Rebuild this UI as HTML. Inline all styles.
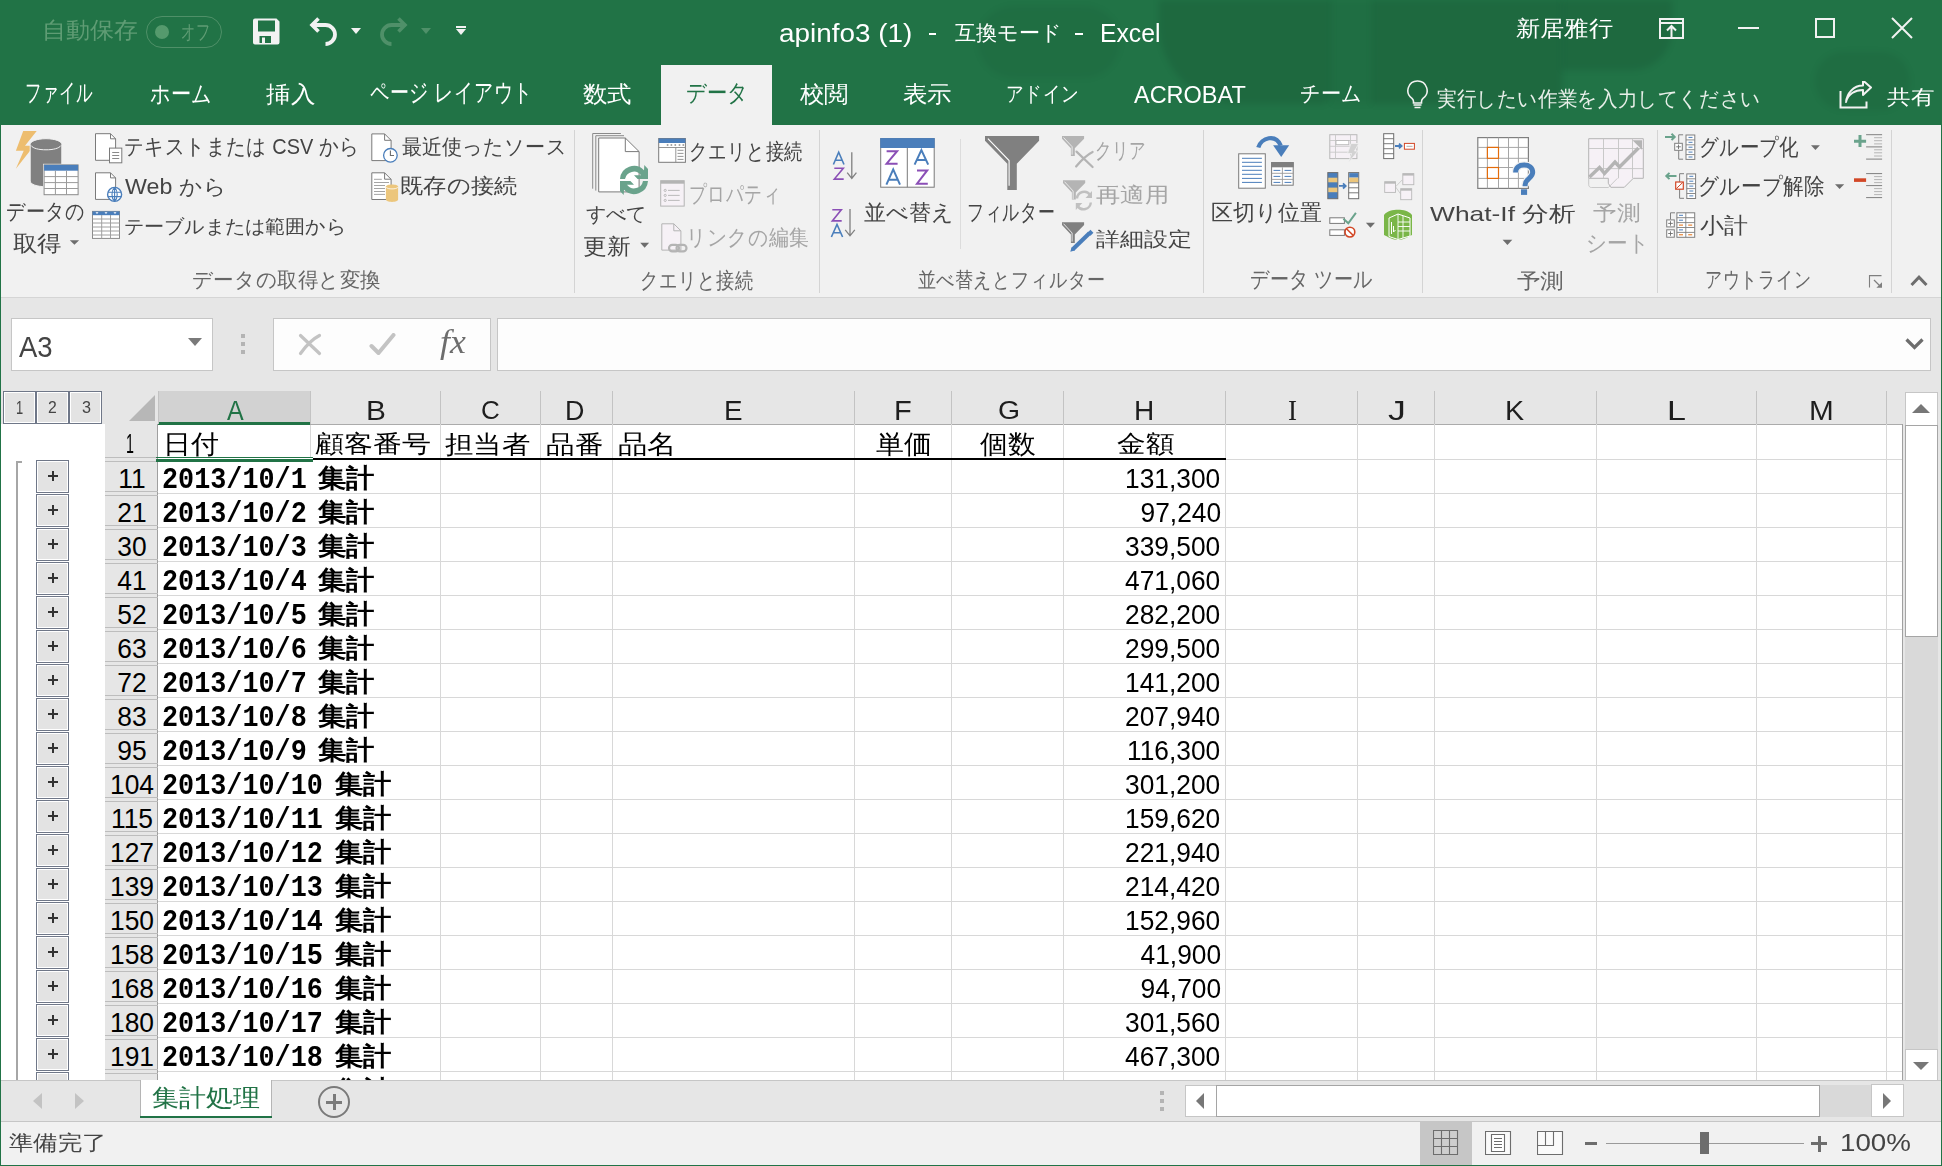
<!DOCTYPE html>
<html><head><meta charset="utf-8"><title>Excel</title>
<style>
html,body{margin:0;padding:0}
body{width:1942px;height:1166px;position:relative;overflow:hidden;background:#fff;font-family:"Liberation Sans",sans-serif}
div,svg{position:absolute;box-sizing:border-box}
.t{white-space:pre;transform-origin:0 0}
.t.r{transform-origin:100% 0}
.t.c{transform-origin:50% 0}
.sep{width:1px;background:#d4d4d4}
.vl{width:1px;background:#d8d8d8;top:424px;height:656px}
.hl{height:1px;background:#d8d8d8;left:158px;width:1744px}
.cs{width:1px;background:#c3c3c3;top:391px;height:33px}
.ob{width:33px;height:33px;left:36px;border:1px solid #6f7788;background:#e3e3e3;box-shadow:inset 0 0 0 1px #fff}
.rh{left:105px;width:53px;height:1px;background:#bdbdbd}
</style></head><body>
<!-- title + tabs -->
<div style="left:0;top:0;width:1942px;height:125px;background:#217346"></div>
<div style="left:978px;top:6px;width:142px;height:72px;border-radius:36px;background:rgba(0,0,0,.045);filter:blur(3px)"></div>
<div style="left:1159px;top:0;width:172px;height:104px;border-radius:0 0 10px 80px;background:rgba(0,0,0,.085);filter:blur(3px)"></div>
<div style="left:1331px;top:0;width:41px;height:104px;background:rgba(0,0,0,.035);filter:blur(3px)"></div>
<div style="left:1372px;top:0;width:190px;height:104px;background:rgba(0,0,0,.085);filter:blur(3px)"></div>
<div style="left:1562px;top:0;width:110px;height:70px;border-radius:0 0 40px 0;background:rgba(0,0,0,.085);filter:blur(3px)"></div>
<div style="left:1815px;top:52px;width:95px;height:58px;border-radius:40px;background:rgba(0,0,0,.05);filter:blur(3px)"></div>
<div style="left:928.6px;top:33px;width:7.8px;height:2px;background:#fff"></div>
<div style="left:1074.8px;top:33px;width:8.2px;height:2px;background:#fff"></div>
<div style="left:661px;top:65px;width:111px;height:60px;background:#f1f1f1"></div>
<!-- autosave pill -->
<div style="left:146px;top:16px;width:76px;height:32px;border:1px solid #4f9068;border-radius:16px"></div>
<div style="left:155px;top:25px;width:14px;height:14px;border-radius:7px;background:#559a6d"></div>
<!-- save icon -->
<svg style="left:253px;top:18px" width="27" height="27" viewBox="0 0 27 27"><path d="M2 0.5h21.5l3 3v21a2 2 0 0 1-2 2h-22.5a2 2 0 0 1-2-2v-22a2 2 0 0 1 2-2z" fill="#f2f2f2"/><rect x="5" y="2.5" width="17" height="11" fill="#217346"/><rect x="6.5" y="18" width="11.5" height="7" fill="#217346"/><rect x="9" y="19.5" width="3" height="5.5" fill="#f2f2f2"/></svg>
<!-- undo -->
<svg style="left:309px;top:16px" width="30" height="30" viewBox="0 0 30 30"><path d="M9.5 2.5L3 9l6.5 6.5" stroke="#f2f2f2" stroke-width="3.6" fill="none"/><path d="M3.5 9H16.5a9.5 9.5 0 0 1 0 19" stroke="#f2f2f2" stroke-width="3.8" fill="none"/></svg>
<svg style="left:351px;top:28px" width="11" height="7"><path d="M0 0h10l-5 6z" fill="#f2f2f2"/></svg>
<!-- redo faded -->
<svg style="left:378px;top:16px" width="30" height="30" viewBox="0 0 30 30"><path d="M20.5 2.5L27 9l-6.5 6.5" stroke="#4f9069" stroke-width="3.6" fill="none"/><path d="M26.5 9H13.5a9.5 9.5 0 0 0 0 19" stroke="#4f9069" stroke-width="3.8" fill="none"/></svg>
<svg style="left:421px;top:28px" width="11" height="7"><path d="M0 0h10l-5 6z" fill="#4f9069"/></svg>
<!-- customize qat -->
<div style="left:456px;top:26px;width:10px;height:1.5px;background:#f2f2f2"></div>
<svg style="left:456px;top:29px" width="11" height="7"><path d="M0 0h10l-5 6z" fill="#f2f2f2"/></svg>
<!-- window controls -->
<div style="left:1659px;top:18px;width:25px;height:21px;border:2px solid #f2f2f2"></div>
<div style="left:1659px;top:22px;width:25px;height:2px;background:#f2f2f2"></div>
<svg style="left:1664px;top:24px" width="15" height="15"><path d="M7.5 2v11M3 6.5l4.5-4.5 4.5 4.5" stroke="#f2f2f2" stroke-width="2" fill="none"/></svg>
<div style="left:1738px;top:27px;width:21px;height:2px;background:#f2f2f2"></div>
<div style="left:1815px;top:18px;width:20px;height:20px;border:2px solid #f2f2f2"></div>
<svg style="left:1891px;top:17px" width="22" height="22"><path d="M1 1l20 20M21 1l-20 20" stroke="#f2f2f2" stroke-width="2"/></svg>
<!-- lightbulb -->
<svg style="left:1406px;top:80px" width="23" height="29" viewBox="0 0 23 29"><path d="M11.5 1a9.5 9.5 0 0 0-5.5 17.3c1.2 1 1.5 2 1.5 3.2v1.5h8v-1.5c0-1.2 .3-2.2 1.5-3.2a9.5 9.5 0 0 0-5.5-17.3z" fill="none" stroke="#f2f2f2" stroke-width="1.6"/><path d="M7.5 25h8M8.5 27.5h6" stroke="#f2f2f2" stroke-width="1.6"/></svg>
<!-- share -->
<svg style="left:1839px;top:81px" width="34" height="28" viewBox="0 0 34 28"><path d="M1.5 10v16.5h26v-6" fill="none" stroke="#f2f2f2" stroke-width="2"/><path d="M7 21c2-8 9-12 17-12v5l8-7.5-8-7v5c-10 0-16 8-17 16.5z" fill="none" stroke="#f2f2f2" stroke-width="2" stroke-linejoin="round"/></svg>

<!-- ribbon -->
<div style="left:0;top:125px;width:1942px;height:172px;background:#f1f1f1"></div>
<div style="left:0;top:297px;width:1942px;height:1px;background:#d5d5d5"></div>
<div class="sep" style="left:574px;top:130px;height:163px"></div>
<div class="sep" style="left:819px;top:130px;height:163px"></div>
<div class="sep" style="left:960px;top:139px;height:110px;background:#dcdcdc"></div>
<div class="sep" style="left:1203px;top:130px;height:163px"></div>
<div class="sep" style="left:1422px;top:130px;height:163px"></div>
<div class="sep" style="left:1657px;top:130px;height:163px"></div>
<div class="sep" style="left:1891px;top:130px;height:163px"></div>
<svg style="left:0;top:125px" width="1942" height="172" viewBox="0 125 1942 172" fill="none">
<!-- Get Data -->
<path d="M23.2 130.9h13.5l-11.7 14.8h9l-18.1 23.1 7.8-18h-7.8z" fill="#edbd6f"/>
<path d="M30.2 144.5v36.5c0 3.5 7 5.7 15.8 5.7s15.8-2.2 15.8-5.7v-36.5c0-3.3-7-5.8-15.8-5.8s-15.8 2.5-15.8 5.8z" fill="#808080" stroke="#f1f1f1" stroke-width="1"/>
<path d="M31 145.5c2 3 8 4.3 15 4.3s13-1.3 15-4.3" stroke="#f1f1f1" stroke-width="1"/>
<rect x="43.6" y="164.4" width="35" height="30.8" fill="#fff" stroke="#f1f1f1" stroke-width="1.2"/>
<rect x="44.1" y="164.9" width="34" height="29.8" fill="#fff" stroke="#8a8a8a" stroke-width="1"/>
<rect x="44.1" y="164.9" width="34" height="5.8" fill="#4a7ebb"/>
<path d="M55.4 170.7v24M66.5 170.7v24M44.1 176.6h34M44.1 182.6h34M44.1 188.5h34" stroke="#9a9a9a" stroke-width="1"/>
<path d="M69.8 240.2h9.3l-4.65 4.6z" fill="#6d6d6d"/>
<!-- From Text -->
<path d="M95.5 133.7h15l5.1 5.1v21.5h-20.1z" fill="#fff" stroke="#7a7a7a" stroke-width="1"/>
<path d="M110.5 133.7v5.1h5.1" stroke="#7a7a7a" stroke-width="1"/>
<rect x="109.5" y="148.1" width="12.3" height="14.7" fill="#fff" stroke="#7a7a7a" stroke-width="1"/>
<path d="M112.2 152.5h7M112.2 155.5h7M112.2 158.5h7" stroke="#8a8a8a" stroke-width="1"/>
<!-- From Web -->
<path d="M95.5 172.8h15l5.1 5.1v21.5h-20.1z" fill="#fff" stroke="#7a7a7a" stroke-width="1"/>
<path d="M110.5 172.8v5.1h5.1" stroke="#7a7a7a" stroke-width="1"/>
<circle cx="114.6" cy="194.4" r="7" fill="#fff" stroke="#4a7ebb" stroke-width="1.4"/>
<path d="M107.8 192.2h13.6M107.8 196.6h13.6M114.6 187.4v14M114.6 187.4c-3.5 3.5-3.5 10.5 0 14M114.6 187.4c3.5 3.5 3.5 10.5 0 14" stroke="#4a7ebb" stroke-width="1.1"/>
<!-- From Table -->
<rect x="92.5" y="211.4" width="27" height="27" fill="#fff" stroke="#8a8a8a" stroke-width="1"/>
<rect x="92.5" y="211.4" width="27" height="3.8" fill="#4a7ebb"/>
<path d="M95.5 212.3h3l-1.5 1.8zM104.5 212.3h3l-1.5 1.8zM113.5 212.3h3l-1.5 1.8z" fill="#fff"/>
<path d="M101.7 215v23.5M110.5 215v23.5M92.5 219h27M92.5 223h27M92.5 227h27M92.5 231h27M92.5 235h27" stroke="#a0a0a0" stroke-width="1"/>
<!-- Recent sources -->
<path d="M371.8 133.9h12.8l6.5 6.5v20.2h-19.3z" fill="#fff" stroke="#7a7a7a" stroke-width="1"/>
<path d="M384.6 133.9v6.4h6.5" stroke="#7a7a7a" stroke-width="1"/>
<circle cx="390.4" cy="155.3" r="6.8" fill="#fff" stroke="#4a7ebb" stroke-width="1.3"/>
<path d="M390.4 150.5v5h3.6" stroke="#6d6d6d" stroke-width="1.1"/>
<!-- Existing connections -->
<path d="M371.8 172.8h12.8l6.5 6.5v20.2h-19.3z" fill="#fff" stroke="#7a7a7a" stroke-width="1"/>
<path d="M384.6 172.8v6.4h6.5" stroke="#7a7a7a" stroke-width="1"/>
<path d="M374 179.3h7.8M374 182.5h15M374 185.5h11M374 188.5h11M374 191.5h11M374 194.4h11" stroke="#9a9a9a" stroke-width="0.9"/>
<path d="M385.9 186.6v13c0 1.4 2.7 2.3 6.1 2.3s6.1-0.9 6.1-2.3v-13c0-1.3-2.7-2.2-6.1-2.2s-6.1 0.9-6.1 2.2z" fill="#ecc67c"/>
<path d="M386.2 187.4c1 1 3 1.5 5.8 1.5s4.8-0.5 5.8-1.5" stroke="#fff" stroke-width="0.8"/>
<!-- Refresh all -->
<path d="M592.7 188.7v-55.2h28.2M595.8 190.6v-54.9h28.2" stroke="#8a8a8a" stroke-width="1"/>
<path d="M598.7 138h26.6l13.8 13.6v40.3h-40.4z" fill="#fff" stroke="#7a7a7a" stroke-width="1"/>
<path d="M625.3 138v13.6h13.8" stroke="#7a7a7a" stroke-width="1"/>
<path d="M620 179A14 14 0 0 1 644 170.2L644.3 165L648 169L648 179L637.6 179L634 175.2L641 175.2A9 9 0 0 0 625 179Z" fill="#6aa38c"/>
<path d="M648 181A14 14 0 0 1 624 189.8L623.7 195L620 191L620 181L630.4 181L634 184.8L627 184.8A9 9 0 0 0 643 181Z" fill="#6aa38c"/>
<path d="M640.2 242.8h8.9l-4.45 5z" fill="#6d6d6d"/>
<!-- Queries & connections -->
<rect x="658.7" y="138.5" width="26.7" height="23.8" fill="#fff" stroke="#7a7a7a" stroke-width="1"/>
<rect x="658.7" y="138.5" width="26.7" height="4.5" fill="#4a7ebb"/>
<path d="M666.8 145h1.6M670.6 145h1.6M674.5 145h1.6M678.7 145h1.6M682.5 145h1.6" stroke="#8a8a8a" stroke-width="1.4"/>
<path d="M658.7 147.5h26.7M675.8 147.5v14.8M677.5 150.3h6M677.5 153.4h6M677.5 156.4h6M677.5 159.4h6" stroke="#8a8a8a" stroke-width="0.9"/>
<!-- Properties faded -->
<rect x="660.7" y="180.7" width="23.5" height="25.4" fill="#f6f1f6" stroke="#b4b4b4" stroke-width="1"/>
<rect x="660.7" y="180.7" width="23.5" height="3" fill="#b4b4b4"/>
<circle cx="665.2" cy="190.4" r="1.1" stroke="#b4b4b4" stroke-width="0.9"/><circle cx="665.2" cy="195.4" r="1.1" stroke="#b4b4b4" stroke-width="0.9"/><circle cx="665.2" cy="200.4" r="1.1" stroke="#b4b4b4" stroke-width="0.9"/>
<path d="M668 190.4h11.7M668 195.4h11.7M668 200.4h11.7" stroke="#b4b4b4" stroke-width="0.9"/>
<!-- Edit links faded -->
<path d="M661.8 223.8h12l7.1 7v19.3h-19.1z" fill="#f6f1f6" stroke="#b4b4b4" stroke-width="1"/>
<path d="M673.8 223.8v7h7.1" stroke="#b4b4b4" stroke-width="1"/>
<rect x="669" y="244.8" width="10" height="6.6" rx="3.3" stroke="#b4b4b4" stroke-width="2.2"/>
<rect x="676.5" y="244.8" width="10" height="6.6" rx="3.3" stroke="#b4b4b4" stroke-width="2.2"/>

<!-- Sort AZ -->
<path d="M833.4 164.5l5.3-12.3 5.3 12.3M835.2 160.3h7" stroke="#4a7ebb" stroke-width="1.6"/>
<path d="M834.3 168.3h9l-9 10.8h9.4" stroke="#8b4fb6" stroke-width="1.6"/>
<path d="M851.8 152.2v26.2M847.2 172.6l4.6 5.8 4.6-5.8" stroke="#808080" stroke-width="1.3"/>
<!-- Sort ZA -->
<path d="M832.3 209.7h9l-9 11.2h9.4" stroke="#8b4fb6" stroke-width="1.6"/>
<path d="M831.4 237l5.6-12.6 5.6 12.6M833.3 232.8h7.4" stroke="#4a7ebb" stroke-width="1.6"/>
<path d="M850 208.9v27M845.2 229.8l4.8 6 4.8-6" stroke="#808080" stroke-width="1.3"/>
<!-- Sort dialog -->
<rect x="880.7" y="138.6" width="53.5" height="48.6" fill="#fff" stroke="#7a7a7a" stroke-width="1"/>
<rect x="880.2" y="138.1" width="54.5" height="9.9" fill="#4a7ebb"/>
<path d="M907.3 148v39.2" stroke="#7a7a7a" stroke-width="1"/>
<path d="M886.6 151.2h10.5l-10.5 12.5h11" stroke="#8b4fb6" stroke-width="2"/>
<path d="M886.4 184.7l6.8-15.3 6.8 15.3M888.7 179.8h9" stroke="#4a7ebb" stroke-width="2"/>
<path d="M914.6 164.7l6.8-14.5 6.8 14.5M916.9 160h9" stroke="#4a7ebb" stroke-width="2"/>
<path d="M917 170.4h10.2l-10.2 13.3h10.8" stroke="#8b4fb6" stroke-width="2"/>
<!-- Filter -->
<path d="M985 136h54.1v4.8l-22.3 22.9v26.2h-9.5v-26.2l-22.3-22.9z" fill="#808080"/>
<path d="M987.9 138.6l21.2 21.9v25.3" stroke="#fff" stroke-width="1.1"/>
<!-- Clear -->
<path d="M1062 136h22.1v2.8l-9.3 9.5v7.6h-3.9v-7.6l-8.9-9.5z" fill="#b4b4b4"/>
<path d="M1063.5 137.5l8.6 9.2v8" stroke="#f1f1f1" stroke-width="0.9"/>
<path d="M1076.5 151.6l16.1 15.4M1092.6 152c-6 3-11.5 8.5-16.5 14.5" stroke="#b4b4b4" stroke-width="2.2" stroke-linecap="round"/>
<!-- Reapply -->
<path d="M1063 180.2h22.2v2.8l-9.4 9.6v7h-3.9v-7l-8.9-9.6z" fill="#b4b4b4"/>
<path d="M1064.5 181.7l8.6 9.3v8" stroke="#f1f1f1" stroke-width="0.9"/>
<path d="M1077 198.5a7.2 7.2 0 0 1 13.2-3.5" stroke="#c0c0c0" stroke-width="2.4"/>
<path d="M1092 191v7h-6.5z" fill="#c0c0c0"/>
<path d="M1090.8 202.5a7.2 7.2 0 0 1-13.2 3.5" stroke="#c0c0c0" stroke-width="2.4"/>
<path d="M1075.8 210v-7h6.5z" fill="#c0c0c0"/>
<!-- Advanced -->
<path d="M1062 222.2h22.1v2.8l-9.3 9.6v8.3h-3.9v-8.3l-8.9-9.6z" fill="#808080"/>
<path d="M1063.5 223.7l8.6 9.3v8.6" stroke="#f1f1f1" stroke-width="0.9"/>
<path d="M1072.6 249.5l17-16.4" stroke="#4a7ebb" stroke-width="4.2"/>
<path d="M1070.3 251.8l1.2-4.3 3.2 3.1z" fill="#4a7ebb"/>
<path d="M1089 231.3l3 2.9" stroke="#4a7ebb" stroke-width="4.2"/>
<!-- Text to columns -->
<rect x="1238.7" y="153.8" width="26.6" height="34.4" fill="#fff" stroke="#7a7a7a" stroke-width="1"/>
<path d="M1242 158.3h19.9M1242 162.3h19.9M1242 166.3h19.9M1242 170.3h19.9M1242 174.3h19.9M1242 178.4h19.9M1242 182.4h19.9" stroke="#4a7ebb" stroke-width="1"/>
<rect x="1271.6" y="162.6" width="21.6" height="22.6" fill="#fff" stroke="#7a7a7a" stroke-width="1"/>
<rect x="1271.1" y="162.1" width="22.6" height="5.2" fill="#7f7f7f"/>
<path d="M1282.4 167.3v18M1271.6 173.3h21.6M1271.6 179.4h21.6" stroke="#9a9a9a" stroke-width="0.9"/>
<path d="M1273.5 170.4h6.8M1284.5 170.4h6.8M1273.5 176.4h6.8M1284.5 176.4h6.8M1273.5 182.4h6.8M1284.5 182.4h6.8" stroke="#4a7ebb" stroke-width="1"/>
<path d="M1258.3 147.5c3-10 17.5-14 22.4-2" stroke="#4a7ebb" stroke-width="4.3"/>
<path d="M1273.1 145.2h16.1l-8 11.9z" fill="#4a7ebb"/>
<!-- Flash fill faded -->
<rect x="1329.8" y="134.7" width="27.1" height="23.9" fill="#f6f1f6" stroke="#b9b9b9" stroke-width="1"/>
<path d="M1335.5 134.7v23.9M1350.5 134.7v23.9M1329.8 140.5h27.1M1329.8 146.3h27.1M1329.8 152.2h27.1" stroke="#c8c8c8" stroke-width="0.9"/>
<rect x="1336" y="140.5" width="12.8" height="4.2" fill="#fff" stroke="#b9b9b9" stroke-width="0.9"/>
<path d="M1351 143.5h7.8l-4.3 7.5h3.5l-9.5 11.6 3-9.1h-4z" fill="#d2d2d2" stroke="#f1f1f1" stroke-width="0.8"/>
<!-- Remove duplicates -->
<rect x="1327.8" y="172.6" width="10" height="26.1" fill="#4a7ebb" stroke="#6d6d6d" stroke-width="1"/>
<path d="M1328.3 177.6h9M1328.3 193.2h9" stroke="#6d6d6d" stroke-width="0"/>
<rect x="1328.3" y="177.7" width="9" height="4.6" fill="#ecc67c"/>
<rect x="1328.3" y="187.6" width="9" height="4.6" fill="#ecc67c"/>
<rect x="1348.7" y="172.6" width="10" height="26.1" fill="#fff" stroke="#6d6d6d" stroke-width="1"/>
<rect x="1349.2" y="173.1" width="9" height="4.5" fill="#4a7ebb"/>
<rect x="1349.2" y="177.7" width="9" height="4.6" fill="#ecc67c"/>
<path d="M1348.7 182.8h10M1348.7 187.8h10M1348.7 192.8h10" stroke="#6d6d6d" stroke-width="0.9"/>
<path d="M1339 185.9h6.5M1343 183.3l2.7 2.6-2.7 2.6" stroke="#4a7ebb" stroke-width="1.8"/>
<!-- Data validation -->
<rect x="1329.8" y="217.8" width="14.6" height="5.6" fill="#fff" stroke="#7a7a7a" stroke-width="1"/>
<rect x="1329.8" y="229.8" width="14.6" height="5.6" fill="#fff" stroke="#7a7a7a" stroke-width="1"/>
<path d="M1343.4 218.8l4.9 4.5 7.6-10.5" stroke="#6aa38c" stroke-width="2"/>
<circle cx="1349.9" cy="232.1" r="4.9" fill="#fff" stroke="#d24726" stroke-width="1.6"/>
<path d="M1346.5 228.7l6.8 6.8" stroke="#d24726" stroke-width="1.6"/>
<path d="M1365.9 222.8h9.1l-4.55 5z" fill="#6d6d6d"/>
<!-- Consolidate -->
<rect x="1383.7" y="133.7" width="10" height="24.9" fill="#fff" stroke="#6d6d6d" stroke-width="1"/>
<path d="M1383.7 138.7h10M1383.7 143.7h10M1383.7 148.7h10M1383.7 153.7h10" stroke="#6d6d6d" stroke-width="0.9"/>
<path d="M1395 146h6M1399 143.6l2.6 2.4-2.6 2.4" stroke="#4a7ebb" stroke-width="1.8"/>
<rect x="1404.4" y="143.4" width="10" height="5.8" fill="#fff" stroke="#d24726" stroke-width="1"/>
<path d="M1406.5 146.3h6" stroke="#9a9a9a" stroke-width="0.8"/>
<!-- Relationships faded -->
<path d="M1395.5 186.8l6.8-7M1395.5 186.8l5 7" stroke="#c8c8c8" stroke-width="0.9"/>
<rect x="1384.7" y="181.7" width="10.8" height="10.7" fill="#f6f1f6" stroke="#b9b9b9" stroke-width="0.9"/>
<rect x="1384.7" y="181.7" width="10.8" height="2" fill="#b9b9b9"/>
<rect x="1402.8" y="173.6" width="11" height="11.1" fill="#f6f1f6" stroke="#b9b9b9" stroke-width="0.9"/>
<rect x="1402.8" y="173.6" width="11" height="2" fill="#b9b9b9"/>
<rect x="1400.7" y="188.7" width="11" height="11" fill="#f6f1f6" stroke="#b9b9b9" stroke-width="0.9"/>
<rect x="1400.7" y="188.7" width="11" height="2" fill="#b9b9b9"/>
<!-- Manage data model -->
<path d="M1384 215c3-4 9-5.2 14-5.2s11 1.2 14 5.2v20c-4 2-9 4.9-14 4.9s-10-2.9-14-4.9z" fill="#7ab648"/>
<path d="M1389 218l9-4 12 4v18l-12 3.5-9-3z" fill="#7ab648" stroke="#fff" stroke-width="1"/>
<path d="M1398 214v25.5M1398 222h12M1398 226.5h12M1398 231h12M1403 216v22" stroke="#fff" stroke-width="0.9"/>
<path d="M1391.5 222v12M1393.5 226v6l2-2" stroke="#fff" stroke-width="1"/>
<!-- What-If -->
<rect x="1477.8" y="137.6" width="50.6" height="50.8" fill="#fff" stroke="#7f7f7f" stroke-width="1.2"/>
<path d="M1487.4 137.6v50.8M1498.5 137.6v50.8M1508.5 137.6v50.8M1518.4 137.6v50.8M1477.8 147.4h50.6M1477.8 158.3h50.6M1477.8 167.5h50.6M1477.8 178.4h50.6" stroke="#a6a6a6" stroke-width="1"/>
<rect x="1487.4" y="147.4" width="11.1" height="10.9" fill="#fff" stroke="#e46c0a" stroke-width="1.2"/>
<rect x="1487.4" y="167.5" width="11.1" height="10.9" fill="#fff" stroke="#e46c0a" stroke-width="1.2"/>
<path d="M1515.6 172.5c0-5 3.5-7.5 8.5-7.5s8.6 2.7 8.6 7.3c0 6.3-7.6 6.3-7.6 12.6v1.4" stroke="#f1f1f1" stroke-width="7.5"/>
<path d="M1515.6 172.5c0-5 3.5-7.5 8.5-7.5s8.6 2.7 8.6 7.3c0 6.3-7.6 6.3-7.6 12.6v1.4" stroke="#4a7ebb" stroke-width="5"/>
<rect x="1521" y="189.3" width="6.1" height="5.6" fill="#4a7ebb"/>
<path d="M1502.6 239.8h9.7l-4.85 5.2z" fill="#6d6d6d"/>
<!-- Forecast faded -->
<path d="M1588.7 138.7h54.6v39.6h-10l-9 9h-13.5l-2.5-4v-5h-19.6z" fill="#f6f1f6" stroke="#b4b4b4" stroke-width="1"/>
<path d="M1588.7 178.3v6.5c0 1.5 1.2 2.7 2.7 2.7h17l9-9.2M1603.5 138.7v39.6M1618.5 138.7v39.6M1632.5 138.7v39.6M1588.7 148.5h54.6M1588.7 168.6h54.6" stroke="#c4c4c4" stroke-width="0.9"/>
<path d="M1589.5 177l10-9.5 5 6 10.5-11.5 4.5 5 19-19" stroke="#b4b4b4" stroke-width="3.4"/>
<path d="M1632.5 140.2h9.5v9.5z" fill="#b4b4b4"/>
<!-- Group -->
<path d="M1665 136.9h9.5M1671.5 133.8l3.2 3.1-3.2 3.1" stroke="#6aa38c" stroke-width="2"/>
<path d="M1683.1 134.8h-4.4v24.4h4.4" stroke="#7f7f7f" stroke-width="1"/>
<rect x="1674.7" y="143.3" width="7.6" height="7" fill="#fff" stroke="#7f7f7f" stroke-width="1"/>
<path d="M1676.2 146.8h4.6M1678.5 144.6v4.5" stroke="#6d6d6d" stroke-width="0.9"/>
<rect x="1686" y="135" width="8.8" height="24.4" fill="#fff" stroke="#7f7f7f" stroke-width="1"/>
<path d="M1686 139.9h8.8M1686 144.8h8.8M1686 149.7h8.8M1686 154.6h8.8" stroke="#7f7f7f" stroke-width="0.9"/>
<path d="M1688.5 137.4h4M1688.5 142.3h4M1688.5 147.2h4M1688.5 152.1h4M1688.5 157h4" stroke="#4a7ebb" stroke-width="1"/>
<path d="M1811 145.2h8.9l-4.45 4.7z" fill="#6d6d6d"/>
<!-- Ungroup -->
<path d="M1676.5 176h-10M1669.5 172.9l-3.2 3.1 3.2 3.1" stroke="#6aa38c" stroke-width="2"/>
<path d="M1684 173.7h-4.4v24.6h4.4" stroke="#7f7f7f" stroke-width="1"/>
<rect x="1675.7" y="182" width="7.6" height="7.2" fill="#fff" stroke="#d24726" stroke-width="1.2"/>
<path d="M1676.3 188.6l6.4-6.1" stroke="#d24726" stroke-width="1"/>
<rect x="1686.8" y="173.9" width="8.8" height="24.6" fill="#fff" stroke="#7f7f7f" stroke-width="1"/>
<path d="M1686.8 178.8h8.8M1686.8 183.7h8.8M1686.8 188.6h8.8M1686.8 193.5h8.8" stroke="#7f7f7f" stroke-width="0.9"/>
<path d="M1689.3 176.3h4M1689.3 181.2h4M1689.3 186.1h4M1689.3 191h4M1689.3 195.9h4" stroke="#4a7ebb" stroke-width="1"/>
<path d="M1835 184.3h9.2l-4.6 4.7z" fill="#6d6d6d"/>
<!-- Subtotal -->
<path d="M1670.5 219.4v-6.6h4.5" stroke="#7f7f7f" stroke-width="1"/>
<rect x="1676.9" y="212.8" width="17.8" height="24.5" fill="#fff" stroke="#7f7f7f" stroke-width="1"/>
<path d="M1685.8 212.8v24.5M1676.9 217.7h17.8M1676.9 222.6h17.8M1676.9 227.5h17.8M1676.9 232.4h17.8" stroke="#7f7f7f" stroke-width="0.9"/>
<path d="M1679 215.3h4M1679 220.2h4M1679 229.9h4" stroke="#4a7ebb" stroke-width="1"/>
<path d="M1679 225.1h4M1688.2 225.1h4M1679 234.8h4M1688.2 234.8h4" stroke="#e46c0a" stroke-width="1"/>
<rect x="1666.7" y="219.9" width="7.6" height="7" fill="#fff" stroke="#7f7f7f" stroke-width="1"/>
<rect x="1666.7" y="229.8" width="7.6" height="7.4" fill="#fff" stroke="#7f7f7f" stroke-width="1"/>
<path d="M1668.2 223.4h4.6M1670.5 221.2v4.5M1668.2 233.5h4.6M1670.5 231.3v4.5" stroke="#6d6d6d" stroke-width="0.9"/>
<!-- Show detail -->
<path d="M1854 141.2h12.1M1860 135.1v12" stroke="#6aa38c" stroke-width="3"/>
<path d="M1866.1 134.7h16M1866.1 146.9h16M1866.1 159.1h16" stroke="#7f7f7f" stroke-width="1"/>
<path d="M1874.1 137.7h8M1874.1 140.7h8M1874.1 143.9h8M1874.1 149.8h8M1874.1 152.8h8M1874.1 156h8" stroke="#b4b4b4" stroke-width="1"/>
<!-- Hide detail -->
<path d="M1854 180.1h12.1" stroke="#d24726" stroke-width="3.6"/>
<path d="M1866.1 173.6h16M1866.1 185.6h16M1866.1 197.6h16" stroke="#7f7f7f" stroke-width="1"/>
<path d="M1874.1 176.6h8M1874.1 179.6h8M1874.1 182.6h8M1874.1 188.6h8M1874.1 191.6h8M1874.1 194.6h8" stroke="#b4b4b4" stroke-width="1"/>
<!-- dialog launcher + collapse -->
<path d="M1881.5 275.6h-12v12" stroke="#7f7f7f" stroke-width="1.1"/>
<path d="M1874 280l5.5 5.5" stroke="#7f7f7f" stroke-width="1.3"/><path d="M1882 282.2v5.6h-5.6z" fill="#7f7f7f"/>
<path d="M1911.5 285l7.5-7.8 7.5 7.8" stroke="#6d6d6d" stroke-width="3"/>
</svg>


<!-- formula bar area -->
<div style="left:0;top:298px;width:1942px;height:126px;background:#e6e6e6"></div>
<div style="left:11px;top:318px;width:202px;height:53px;background:#fff;border:1px solid #c6c6c6"></div>
<svg style="left:188px;top:338px" width="15" height="9"><path d="M0 0h14l-7 8z" fill="#7a7a7a"/></svg>
<div style="left:241px;top:334px;width:4px;height:4px;background:#b4b4b4"></div>
<div style="left:241px;top:342px;width:4px;height:4px;background:#b4b4b4"></div>
<div style="left:241px;top:350px;width:4px;height:4px;background:#b4b4b4"></div>
<div style="left:273px;top:318px;width:218px;height:53px;background:#fdfdfd;border:1px solid #c6c6c6"></div>
<svg style="left:298px;top:333px" width="25" height="23" viewBox="0 0 25 23"><path d="M2.5 2.5l19 18M21.5 2.5c-8 4-14 11-19 18" stroke="#c3c3c3" stroke-width="3.2" stroke-linecap="round" fill="none"/></svg>
<svg style="left:369px;top:333px" width="27" height="23" viewBox="0 0 27 23"><path d="M2.5 13l7 7 15-18" stroke="#c3c3c3" stroke-width="4" stroke-linejoin="round" stroke-linecap="round" fill="none"/></svg>
<div style="left:497px;top:318px;width:1434px;height:53px;background:#fdfdfd;border:1px solid #c6c6c6"></div>
<svg style="left:1905px;top:338px" width="19" height="12" viewBox="0 0 19 12"><path d="M1.5 1.5l8 8 8-8" stroke="#6d6d6d" stroke-width="3.2" fill="none"/></svg>
<div style="left:3px;top:391px;width:33px;height:33px;border:1px solid #6f7788;background:#e3e3e3;box-shadow:inset 0 0 0 1px #fff"></div>
<div style="left:36px;top:391px;width:33px;height:33px;border:1px solid #6f7788;background:#e3e3e3;box-shadow:inset 0 0 0 1px #fff"></div>
<div style="left:69px;top:391px;width:33px;height:33px;border:1px solid #6f7788;background:#e3e3e3;box-shadow:inset 0 0 0 1px #fff"></div>
<svg style="left:129px;top:395px" width="26" height="26"><path d="M26 0v26h-26z" fill="#b7b7b7"/></svg>
<div style="left:158px;top:391px;width:152px;height:33px;background:#d2d2d2"></div>
<div style="left:158px;top:422px;width:152px;height:3px;background:#217346"></div>
<div style="left:310px;top:424px;width:1592px;height:1px;background:#ababab"></div>
<div class="cs" style="left:158px"></div>
<div class="cs" style="left:310px"></div>
<div class="cs" style="left:440px"></div>
<div class="cs" style="left:540px"></div>
<div class="cs" style="left:612px"></div>
<div class="cs" style="left:854px"></div>
<div class="cs" style="left:951px"></div>
<div class="cs" style="left:1063px"></div>
<div class="cs" style="left:1225px"></div>
<div class="cs" style="left:1357px"></div>
<div class="cs" style="left:1434px"></div>
<div class="cs" style="left:1596px"></div>
<div class="cs" style="left:1756px"></div>
<div class="cs" style="left:1886px"></div>
<div style="left:105px;top:424px;width:53px;height:656px;background:#e6e6e6"></div>
<div style="left:157px;top:424px;width:1px;height:656px;background:#9f9f9f"></div>
<div class="rh" style="top:457px"></div><div class="rh" style="top:461px"></div>
<div class="rh" style="top:491px"></div><div class="rh" style="top:495px"></div>
<div class="rh" style="top:525px"></div><div class="rh" style="top:529px"></div>
<div class="rh" style="top:559px"></div><div class="rh" style="top:563px"></div>
<div class="rh" style="top:593px"></div><div class="rh" style="top:597px"></div>
<div class="rh" style="top:627px"></div><div class="rh" style="top:631px"></div>
<div class="rh" style="top:661px"></div><div class="rh" style="top:665px"></div>
<div class="rh" style="top:695px"></div><div class="rh" style="top:699px"></div>
<div class="rh" style="top:729px"></div><div class="rh" style="top:733px"></div>
<div class="rh" style="top:763px"></div><div class="rh" style="top:767px"></div>
<div class="rh" style="top:797px"></div><div class="rh" style="top:801px"></div>
<div class="rh" style="top:831px"></div><div class="rh" style="top:835px"></div>
<div class="rh" style="top:865px"></div><div class="rh" style="top:869px"></div>
<div class="rh" style="top:899px"></div><div class="rh" style="top:903px"></div>
<div class="rh" style="top:933px"></div><div class="rh" style="top:937px"></div>
<div class="rh" style="top:967px"></div><div class="rh" style="top:971px"></div>
<div class="rh" style="top:1001px"></div><div class="rh" style="top:1005px"></div>
<div class="rh" style="top:1035px"></div><div class="rh" style="top:1039px"></div>
<div class="rh" style="top:1069px"></div><div class="rh" style="top:1073px"></div>
<div style="left:310px;top:425px;width:1px;height:33px;background:#d8d8d8"></div>
<div class="vl" style="left:440px"></div>
<div class="vl" style="left:540px"></div>
<div class="vl" style="left:612px"></div>
<div class="vl" style="left:854px"></div>
<div class="vl" style="left:951px"></div>
<div class="vl" style="left:1063px"></div>
<div class="vl" style="left:1225px"></div>
<div class="vl" style="left:1357px"></div>
<div class="vl" style="left:1434px"></div>
<div class="vl" style="left:1596px"></div>
<div class="vl" style="left:1756px"></div>
<div class="vl" style="left:1886px"></div>
<div class="hl" style="top:459px"></div>
<div class="hl" style="top:493px"></div>
<div class="hl" style="top:527px"></div>
<div class="hl" style="top:561px"></div>
<div class="hl" style="top:595px"></div>
<div class="hl" style="top:629px"></div>
<div class="hl" style="top:663px"></div>
<div class="hl" style="top:697px"></div>
<div class="hl" style="top:731px"></div>
<div class="hl" style="top:765px"></div>
<div class="hl" style="top:799px"></div>
<div class="hl" style="top:833px"></div>
<div class="hl" style="top:867px"></div>
<div class="hl" style="top:901px"></div>
<div class="hl" style="top:935px"></div>
<div class="hl" style="top:969px"></div>
<div class="hl" style="top:1003px"></div>
<div class="hl" style="top:1037px"></div>
<div class="hl" style="top:1071px"></div>
<div style="left:313px;top:458px;width:913px;height:2px;background:#000"></div>
<div style="left:156px;top:457px;width:157px;height:1px;background:#217346"></div>
<div style="left:156px;top:459px;width:157px;height:3px;background:#217346"></div>
<div style="left:1902px;top:424px;width:1px;height:657px;background:#a0a0a0"></div>
<div style="left:0;top:1080px;width:1903px;height:1px;background:#a8a8a8"></div>
<div style="left:16px;top:461px;width:2px;height:619px;background:#a6a6a6"></div>
<div style="left:16px;top:461px;width:6px;height:2px;background:#a6a6a6"></div>
<div class="ob" style="top:460px"></div>
<div style="left:48px;top:475px;width:10px;height:1.5px;background:#333"></div>
<div style="left:52.3px;top:471px;width:1.5px;height:10px;background:#333"></div>
<div class="ob" style="top:494px"></div>
<div style="left:48px;top:509px;width:10px;height:1.5px;background:#333"></div>
<div style="left:52.3px;top:505px;width:1.5px;height:10px;background:#333"></div>
<div class="ob" style="top:528px"></div>
<div style="left:48px;top:543px;width:10px;height:1.5px;background:#333"></div>
<div style="left:52.3px;top:539px;width:1.5px;height:10px;background:#333"></div>
<div class="ob" style="top:562px"></div>
<div style="left:48px;top:577px;width:10px;height:1.5px;background:#333"></div>
<div style="left:52.3px;top:573px;width:1.5px;height:10px;background:#333"></div>
<div class="ob" style="top:596px"></div>
<div style="left:48px;top:611px;width:10px;height:1.5px;background:#333"></div>
<div style="left:52.3px;top:607px;width:1.5px;height:10px;background:#333"></div>
<div class="ob" style="top:630px"></div>
<div style="left:48px;top:645px;width:10px;height:1.5px;background:#333"></div>
<div style="left:52.3px;top:641px;width:1.5px;height:10px;background:#333"></div>
<div class="ob" style="top:664px"></div>
<div style="left:48px;top:679px;width:10px;height:1.5px;background:#333"></div>
<div style="left:52.3px;top:675px;width:1.5px;height:10px;background:#333"></div>
<div class="ob" style="top:698px"></div>
<div style="left:48px;top:713px;width:10px;height:1.5px;background:#333"></div>
<div style="left:52.3px;top:709px;width:1.5px;height:10px;background:#333"></div>
<div class="ob" style="top:732px"></div>
<div style="left:48px;top:747px;width:10px;height:1.5px;background:#333"></div>
<div style="left:52.3px;top:743px;width:1.5px;height:10px;background:#333"></div>
<div class="ob" style="top:766px"></div>
<div style="left:48px;top:781px;width:10px;height:1.5px;background:#333"></div>
<div style="left:52.3px;top:777px;width:1.5px;height:10px;background:#333"></div>
<div class="ob" style="top:800px"></div>
<div style="left:48px;top:815px;width:10px;height:1.5px;background:#333"></div>
<div style="left:52.3px;top:811px;width:1.5px;height:10px;background:#333"></div>
<div class="ob" style="top:834px"></div>
<div style="left:48px;top:849px;width:10px;height:1.5px;background:#333"></div>
<div style="left:52.3px;top:845px;width:1.5px;height:10px;background:#333"></div>
<div class="ob" style="top:868px"></div>
<div style="left:48px;top:883px;width:10px;height:1.5px;background:#333"></div>
<div style="left:52.3px;top:879px;width:1.5px;height:10px;background:#333"></div>
<div class="ob" style="top:902px"></div>
<div style="left:48px;top:917px;width:10px;height:1.5px;background:#333"></div>
<div style="left:52.3px;top:913px;width:1.5px;height:10px;background:#333"></div>
<div class="ob" style="top:936px"></div>
<div style="left:48px;top:951px;width:10px;height:1.5px;background:#333"></div>
<div style="left:52.3px;top:947px;width:1.5px;height:10px;background:#333"></div>
<div class="ob" style="top:970px"></div>
<div style="left:48px;top:985px;width:10px;height:1.5px;background:#333"></div>
<div style="left:52.3px;top:981px;width:1.5px;height:10px;background:#333"></div>
<div class="ob" style="top:1004px"></div>
<div style="left:48px;top:1019px;width:10px;height:1.5px;background:#333"></div>
<div style="left:52.3px;top:1015px;width:1.5px;height:10px;background:#333"></div>
<div class="ob" style="top:1038px"></div>
<div style="left:48px;top:1053px;width:10px;height:1.5px;background:#333"></div>
<div style="left:52.3px;top:1049px;width:1.5px;height:10px;background:#333"></div>
<div class="ob" style="top:1072px"></div>
<div style="left:1903px;top:391px;width:38px;height:690px;background:#e6e6e6"></div>
<div style="left:1905px;top:425px;width:33px;height:624px;background:#d9d9d9"></div>
<div style="left:1905px;top:392px;width:33px;height:34px;background:#fff;border:1px solid #c6c6c6"></div>
<svg style="left:1912px;top:404px" width="18" height="9"><path d="M0 9h18l-9-9z" fill="#777"/></svg>
<div style="left:1905px;top:425px;width:33px;height:212px;background:#fff;border:1px solid #a5a5a5"></div>
<div style="left:1905px;top:1049px;width:33px;height:32px;background:#fff;border:1px solid #c6c6c6"></div>
<svg style="left:1913px;top:1062px" width="16" height="8"><path d="M0 0h16l-8 8z" fill="#777"/></svg>
<div class="t" style='left:162.29px;top:466.71px;font-size:28.81px;line-height:28.81px;font-family:"Liberation Mono",monospace;font-weight:bold;color:#000;transform:scaleX(0.9305)'>2013/10/1</div>
<div class="t" style='left:318.28px;top:465px;font-size:26px;line-height:26px;font-weight:bold;color:#000;transform:scaleX(1.0901)'>集計</div>
<div class="t r" style='right:721.38px;top:465.22px;font-size:27.18px;line-height:27.18px;color:#000;transform:scaleX(0.9691)'>131,300</div>
<div class="t c" style='left:131.6px;top:465.22px;font-size:27.18px;line-height:27.18px;color:#000;transform:translateX(-50%) scaleX(0.9716)'>11</div>
<div class="t" style='left:162.29px;top:500.71px;font-size:28.81px;line-height:28.81px;font-family:"Liberation Mono",monospace;font-weight:bold;color:#000;transform:scaleX(0.9305)'>2013/10/2</div>
<div class="t" style='left:318.28px;top:499px;font-size:26px;line-height:26px;font-weight:bold;color:#000;transform:scaleX(1.0901)'>集計</div>
<div class="t r" style='right:721.38px;top:499.22px;font-size:27.18px;line-height:27.18px;color:#000;transform:scaleX(0.9691)'>97,240</div>
<div class="t c" style='left:131.6px;top:499.22px;font-size:27.18px;line-height:27.18px;color:#000;transform:translateX(-50%) scaleX(0.9716)'>21</div>
<div class="t" style='left:162.29px;top:534.71px;font-size:28.81px;line-height:28.81px;font-family:"Liberation Mono",monospace;font-weight:bold;color:#000;transform:scaleX(0.9305)'>2013/10/3</div>
<div class="t" style='left:318.28px;top:533px;font-size:26px;line-height:26px;font-weight:bold;color:#000;transform:scaleX(1.0901)'>集計</div>
<div class="t r" style='right:721.38px;top:533.22px;font-size:27.18px;line-height:27.18px;color:#000;transform:scaleX(0.9691)'>339,500</div>
<div class="t c" style='left:131.6px;top:533.22px;font-size:27.18px;line-height:27.18px;color:#000;transform:translateX(-50%) scaleX(0.9716)'>30</div>
<div class="t" style='left:162.29px;top:568.71px;font-size:28.81px;line-height:28.81px;font-family:"Liberation Mono",monospace;font-weight:bold;color:#000;transform:scaleX(0.9305)'>2013/10/4</div>
<div class="t" style='left:318.28px;top:567px;font-size:26px;line-height:26px;font-weight:bold;color:#000;transform:scaleX(1.0901)'>集計</div>
<div class="t r" style='right:721.38px;top:567.22px;font-size:27.18px;line-height:27.18px;color:#000;transform:scaleX(0.9691)'>471,060</div>
<div class="t c" style='left:131.6px;top:567.22px;font-size:27.18px;line-height:27.18px;color:#000;transform:translateX(-50%) scaleX(0.9716)'>41</div>
<div class="t" style='left:162.29px;top:602.71px;font-size:28.81px;line-height:28.81px;font-family:"Liberation Mono",monospace;font-weight:bold;color:#000;transform:scaleX(0.9305)'>2013/10/5</div>
<div class="t" style='left:318.28px;top:601px;font-size:26px;line-height:26px;font-weight:bold;color:#000;transform:scaleX(1.0901)'>集計</div>
<div class="t r" style='right:721.38px;top:601.22px;font-size:27.18px;line-height:27.18px;color:#000;transform:scaleX(0.9691)'>282,200</div>
<div class="t c" style='left:131.6px;top:601.22px;font-size:27.18px;line-height:27.18px;color:#000;transform:translateX(-50%) scaleX(0.9716)'>52</div>
<div class="t" style='left:162.29px;top:636.71px;font-size:28.81px;line-height:28.81px;font-family:"Liberation Mono",monospace;font-weight:bold;color:#000;transform:scaleX(0.9305)'>2013/10/6</div>
<div class="t" style='left:318.28px;top:635px;font-size:26px;line-height:26px;font-weight:bold;color:#000;transform:scaleX(1.0901)'>集計</div>
<div class="t r" style='right:721.38px;top:635.22px;font-size:27.18px;line-height:27.18px;color:#000;transform:scaleX(0.9691)'>299,500</div>
<div class="t c" style='left:131.6px;top:635.22px;font-size:27.18px;line-height:27.18px;color:#000;transform:translateX(-50%) scaleX(0.9716)'>63</div>
<div class="t" style='left:162.29px;top:670.71px;font-size:28.81px;line-height:28.81px;font-family:"Liberation Mono",monospace;font-weight:bold;color:#000;transform:scaleX(0.9305)'>2013/10/7</div>
<div class="t" style='left:318.28px;top:669px;font-size:26px;line-height:26px;font-weight:bold;color:#000;transform:scaleX(1.0901)'>集計</div>
<div class="t r" style='right:721.38px;top:669.22px;font-size:27.18px;line-height:27.18px;color:#000;transform:scaleX(0.9691)'>141,200</div>
<div class="t c" style='left:131.6px;top:669.22px;font-size:27.18px;line-height:27.18px;color:#000;transform:translateX(-50%) scaleX(0.9716)'>72</div>
<div class="t" style='left:162.29px;top:704.71px;font-size:28.81px;line-height:28.81px;font-family:"Liberation Mono",monospace;font-weight:bold;color:#000;transform:scaleX(0.9305)'>2013/10/8</div>
<div class="t" style='left:318.28px;top:703px;font-size:26px;line-height:26px;font-weight:bold;color:#000;transform:scaleX(1.0901)'>集計</div>
<div class="t r" style='right:721.38px;top:703.22px;font-size:27.18px;line-height:27.18px;color:#000;transform:scaleX(0.9691)'>207,940</div>
<div class="t c" style='left:131.6px;top:703.22px;font-size:27.18px;line-height:27.18px;color:#000;transform:translateX(-50%) scaleX(0.9716)'>83</div>
<div class="t" style='left:162.29px;top:738.71px;font-size:28.81px;line-height:28.81px;font-family:"Liberation Mono",monospace;font-weight:bold;color:#000;transform:scaleX(0.9305)'>2013/10/9</div>
<div class="t" style='left:318.28px;top:737px;font-size:26px;line-height:26px;font-weight:bold;color:#000;transform:scaleX(1.0901)'>集計</div>
<div class="t r" style='right:721.38px;top:737.22px;font-size:27.18px;line-height:27.18px;color:#000;transform:scaleX(0.9691)'>116,300</div>
<div class="t c" style='left:131.6px;top:737.22px;font-size:27.18px;line-height:27.18px;color:#000;transform:translateX(-50%) scaleX(0.9716)'>95</div>
<div class="t" style='left:162.29px;top:772.71px;font-size:28.81px;line-height:28.81px;font-family:"Liberation Mono",monospace;font-weight:bold;color:#000;transform:scaleX(0.9305)'>2013/10/10</div>
<div class="t" style='left:334.88px;top:771px;font-size:26px;line-height:26px;font-weight:bold;color:#000;transform:scaleX(1.0901)'>集計</div>
<div class="t r" style='right:721.38px;top:771.22px;font-size:27.18px;line-height:27.18px;color:#000;transform:scaleX(0.9691)'>301,200</div>
<div class="t c" style='left:131.6px;top:771.22px;font-size:27.18px;line-height:27.18px;color:#000;transform:translateX(-50%) scaleX(0.9716)'>104</div>
<div class="t" style='left:162.29px;top:806.71px;font-size:28.81px;line-height:28.81px;font-family:"Liberation Mono",monospace;font-weight:bold;color:#000;transform:scaleX(0.9305)'>2013/10/11</div>
<div class="t" style='left:334.88px;top:805px;font-size:26px;line-height:26px;font-weight:bold;color:#000;transform:scaleX(1.0901)'>集計</div>
<div class="t r" style='right:721.38px;top:805.22px;font-size:27.18px;line-height:27.18px;color:#000;transform:scaleX(0.9691)'>159,620</div>
<div class="t c" style='left:131.6px;top:805.22px;font-size:27.18px;line-height:27.18px;color:#000;transform:translateX(-50%) scaleX(0.9716)'>115</div>
<div class="t" style='left:162.29px;top:840.71px;font-size:28.81px;line-height:28.81px;font-family:"Liberation Mono",monospace;font-weight:bold;color:#000;transform:scaleX(0.9305)'>2013/10/12</div>
<div class="t" style='left:334.88px;top:839px;font-size:26px;line-height:26px;font-weight:bold;color:#000;transform:scaleX(1.0901)'>集計</div>
<div class="t r" style='right:721.38px;top:839.22px;font-size:27.18px;line-height:27.18px;color:#000;transform:scaleX(0.9691)'>221,940</div>
<div class="t c" style='left:131.6px;top:839.22px;font-size:27.18px;line-height:27.18px;color:#000;transform:translateX(-50%) scaleX(0.9716)'>127</div>
<div class="t" style='left:162.29px;top:874.71px;font-size:28.81px;line-height:28.81px;font-family:"Liberation Mono",monospace;font-weight:bold;color:#000;transform:scaleX(0.9305)'>2013/10/13</div>
<div class="t" style='left:334.88px;top:873px;font-size:26px;line-height:26px;font-weight:bold;color:#000;transform:scaleX(1.0901)'>集計</div>
<div class="t r" style='right:721.38px;top:873.22px;font-size:27.18px;line-height:27.18px;color:#000;transform:scaleX(0.9691)'>214,420</div>
<div class="t c" style='left:131.6px;top:873.22px;font-size:27.18px;line-height:27.18px;color:#000;transform:translateX(-50%) scaleX(0.9716)'>139</div>
<div class="t" style='left:162.29px;top:908.71px;font-size:28.81px;line-height:28.81px;font-family:"Liberation Mono",monospace;font-weight:bold;color:#000;transform:scaleX(0.9305)'>2013/10/14</div>
<div class="t" style='left:334.88px;top:907px;font-size:26px;line-height:26px;font-weight:bold;color:#000;transform:scaleX(1.0901)'>集計</div>
<div class="t r" style='right:721.38px;top:907.22px;font-size:27.18px;line-height:27.18px;color:#000;transform:scaleX(0.9691)'>152,960</div>
<div class="t c" style='left:131.6px;top:907.22px;font-size:27.18px;line-height:27.18px;color:#000;transform:translateX(-50%) scaleX(0.9716)'>150</div>
<div class="t" style='left:162.29px;top:942.71px;font-size:28.81px;line-height:28.81px;font-family:"Liberation Mono",monospace;font-weight:bold;color:#000;transform:scaleX(0.9305)'>2013/10/15</div>
<div class="t" style='left:334.88px;top:941px;font-size:26px;line-height:26px;font-weight:bold;color:#000;transform:scaleX(1.0901)'>集計</div>
<div class="t r" style='right:721.38px;top:941.22px;font-size:27.18px;line-height:27.18px;color:#000;transform:scaleX(0.9691)'>41,900</div>
<div class="t c" style='left:131.6px;top:941.22px;font-size:27.18px;line-height:27.18px;color:#000;transform:translateX(-50%) scaleX(0.9716)'>158</div>
<div class="t" style='left:162.29px;top:976.71px;font-size:28.81px;line-height:28.81px;font-family:"Liberation Mono",monospace;font-weight:bold;color:#000;transform:scaleX(0.9305)'>2013/10/16</div>
<div class="t" style='left:334.88px;top:975px;font-size:26px;line-height:26px;font-weight:bold;color:#000;transform:scaleX(1.0901)'>集計</div>
<div class="t r" style='right:721.38px;top:975.22px;font-size:27.18px;line-height:27.18px;color:#000;transform:scaleX(0.9691)'>94,700</div>
<div class="t c" style='left:131.6px;top:975.22px;font-size:27.18px;line-height:27.18px;color:#000;transform:translateX(-50%) scaleX(0.9716)'>168</div>
<div class="t" style='left:162.29px;top:1010.71px;font-size:28.81px;line-height:28.81px;font-family:"Liberation Mono",monospace;font-weight:bold;color:#000;transform:scaleX(0.9305)'>2013/10/17</div>
<div class="t" style='left:334.88px;top:1009px;font-size:26px;line-height:26px;font-weight:bold;color:#000;transform:scaleX(1.0901)'>集計</div>
<div class="t r" style='right:721.38px;top:1009.22px;font-size:27.18px;line-height:27.18px;color:#000;transform:scaleX(0.9691)'>301,560</div>
<div class="t c" style='left:131.6px;top:1009.22px;font-size:27.18px;line-height:27.18px;color:#000;transform:translateX(-50%) scaleX(0.9716)'>180</div>
<div class="t" style='left:162.29px;top:1044.71px;font-size:28.81px;line-height:28.81px;font-family:"Liberation Mono",monospace;font-weight:bold;color:#000;transform:scaleX(0.9305)'>2013/10/18</div>
<div class="t" style='left:334.88px;top:1043px;font-size:26px;line-height:26px;font-weight:bold;color:#000;transform:scaleX(1.0901)'>集計</div>
<div class="t r" style='right:721.38px;top:1043.22px;font-size:27.18px;line-height:27.18px;color:#000;transform:scaleX(0.9691)'>467,300</div>
<div class="t c" style='left:131.6px;top:1043.22px;font-size:27.18px;line-height:27.18px;color:#000;transform:translateX(-50%) scaleX(0.9716)'>191</div>
<div class="t" style='left:334.88px;top:1077px;font-size:26px;line-height:26px;font-weight:bold;color:#000;transform:scaleX(1.0901)'>集計</div>
<div class="t r" style='right:721.38px;top:1077.22px;font-size:27.18px;line-height:27.18px;color:#000;transform:scaleX(0.9691)'>282,940</div>
<div class="t c" style='left:131.6px;top:1077.22px;font-size:27.18px;line-height:27.18px;color:#000;transform:translateX(-50%) scaleX(0.9716)'>201</div>
<div style="left:0;top:1080px;width:1942px;height:41px;background:#e6e6e6;border-top:1px solid #c6c6c6"></div>
<svg style="left:33px;top:1093px" width="9" height="16"><path d="M9 0v16l-9-8z" fill="#c3c3c3"/></svg>
<svg style="left:75px;top:1093px" width="9" height="16"><path d="M0 0v16l9-8z" fill="#c3c3c3"/></svg>
<div style="left:140px;top:1080px;width:132px;height:38px;background:#fff;border-left:1px solid #b5b5b5;border-right:1px solid #b5b5b5"></div>
<div style="left:140px;top:1116px;width:132px;height:2px;background:#217346"></div>
<div style="left:318px;top:1086px;width:32px;height:32px;border:2px solid #7a7a7a;border-radius:50%"></div>
<div style="left:326px;top:1100.5px;width:16px;height:3px;background:#7a7a7a"></div>
<div style="left:332.5px;top:1094px;width:3px;height:16px;background:#7a7a7a"></div>
<div style="left:1160px;top:1091px;width:4px;height:4px;background:#b4b4b4"></div>
<div style="left:1160px;top:1099px;width:4px;height:4px;background:#b4b4b4"></div>
<div style="left:1160px;top:1107px;width:4px;height:4px;background:#b4b4b4"></div>
<div style="left:1185px;top:1085px;width:719px;height:32px;background:#d9d9d9"></div>
<div style="left:1185px;top:1085px;width:32px;height:32px;background:#fff;border:1px solid #c6c6c6"></div>
<svg style="left:1196px;top:1093px" width="8" height="16"><path d="M8 0v16l-8-8z" fill="#777"/></svg>
<div style="left:1216px;top:1085px;width:604px;height:32px;background:#fff;border:1px solid #a5a5a5"></div>
<div style="left:1871px;top:1084px;width:33px;height:33px;background:#fff;border:1px solid #c6c6c6"></div>
<svg style="left:1883px;top:1093px" width="8" height="16"><path d="M0 0v16l8-8z" fill="#777"/></svg>
<div style="left:0;top:1121px;width:1942px;height:45px;background:#f1f1f1;border-top:1px solid #c6c6c6"></div>
<div style="left:1420px;top:1122px;width:52px;height:44px;background:#c6c6c6"></div>
<svg style="left:1433px;top:1130px" width="26" height="26"><rect x="0.5" y="0.5" width="24" height="24" fill="#cecece"/><path d="M0.5 0.5h24v24h-24zM8.5 0.5v24M16.5 0.5v24M0.5 8.5h24M0.5 16.5h24" fill="none" stroke="#6d6d6d" stroke-width="1.1"/></svg>
<svg style="left:1485px;top:1131px" width="27" height="25"><path d="M0.5 0.5h25v23h-25z" fill="#fafafa" stroke="#6d6d6d" stroke-width="1.1"/><path d="M6.5 3.5h13v17h-13z" fill="#fff" stroke="#6d6d6d" stroke-width="1.1"/><path d="M9 7.5h8M9 10.5h8M9 13.5h8M9 16.5h8" stroke="#6d6d6d" stroke-width="1"/></svg>
<svg style="left:1537px;top:1131px" width="27" height="25"><path d="M0.5 0.5h25v23h-25z" fill="#fafafa" stroke="#6d6d6d" stroke-width="1.1"/><path d="M0.5 14.5h16v-14M8.5 0.5v14" fill="none" stroke="#6d6d6d" stroke-width="1.1"/></svg>
<div style="left:1585px;top:1142px;width:12px;height:3px;background:#6d6d6d"></div>
<div style="left:1606px;top:1143px;width:198px;height:1px;background:#9a9a9a"></div>
<div style="left:1700px;top:1132px;width:9px;height:22px;background:#6d6d6d"></div>
<div style="left:1811px;top:1142px;width:16px;height:3px;background:#6d6d6d"></div>
<div style="left:1817.5px;top:1135.5px;width:3px;height:16px;background:#6d6d6d"></div>
<div style="left:0;top:125px;width:1px;height:1041px;background:#217346"></div>
<div style="left:1941px;top:125px;width:1px;height:1041px;background:#217346"></div>
<div style="left:0;top:1165px;width:1942px;height:1px;background:#217346"></div><div class="t" style='left:42.4px;top:19.3px;font-size:23.09px;line-height:23.09px;color:#5f9c74;transform:scaleX(1.0473)'>自動保存</div>
<div class="t" style='left:181.4px;top:21.5px;font-size:20.73px;line-height:20.73px;color:#5f9c74;transform:scaleX(0.6768)'>オフ</div>
<div class="t" style='left:779.3px;top:20.8px;font-size:25.43px;line-height:25.43px;color:#ffffff;transform:scaleX(1.0959)'>apinfo3 (1)</div>
<div class="t" style='left:955.4px;top:22.8px;font-size:21.49px;line-height:21.49px;color:#ffffff;transform:scaleX(1.0036)'>互換モード</div>
<div class="t" style='left:1100px;top:21.4px;font-size:25px;line-height:25px;color:#ffffff;transform:scaleX(0.9897)'>Excel</div>
<div class="t" style='left:1516px;top:17.5px;font-size:21.86px;line-height:21.86px;color:#ffffff;transform:scaleX(1.1016)'>新居雅行</div>
<div class="t" style='left:24.8px;top:81.4px;font-size:24.83px;line-height:24.83px;color:#ffffff;transform:scaleX(0.6588)'>ファイル</div>
<div class="t" style='left:149.6px;top:82px;font-size:24.38px;line-height:24.38px;color:#ffffff;transform:scaleX(0.8431)'>ホーム</div>
<div class="t" style='left:266px;top:83.7px;font-size:22.53px;line-height:22.53px;color:#ffffff;transform:scaleX(1.0657)'>挿入</div>
<div class="t" style='left:369.8px;top:79.7px;font-size:25.06px;line-height:25.06px;color:#ffffff;transform:scaleX(0.7629)'>ページ レイアウト</div>
<div class="t" style='left:583px;top:82.7px;font-size:23.23px;line-height:23.23px;color:#ffffff;transform:scaleX(1.0602)'>数式</div>
<div class="t" style='left:686px;top:81.4px;font-size:24.22px;line-height:24.22px;color:#217346;transform:scaleX(0.8468)'>データ</div>
<div class="t" style='left:799.8px;top:84.4px;font-size:22.6px;line-height:22.6px;color:#ffffff;transform:scaleX(1.0629)'>校閲</div>
<div class="t" style='left:902.9px;top:83.4px;font-size:22.74px;line-height:22.74px;color:#ffffff;transform:scaleX(1.0647)'>表示</div>
<div class="t" style='left:1006.3px;top:84px;font-size:21.26px;line-height:21.26px;color:#ffffff;transform:scaleX(0.8352)'>アドイン</div>
<div class="t" style='left:1134.4px;top:83px;font-size:24.65px;line-height:24.65px;color:#ffffff;transform:scaleX(0.9527)'>ACROBAT</div>
<div class="t" style='left:1300px;top:83.3px;font-size:21.93px;line-height:21.93px;color:#ffffff;transform:scaleX(0.9200)'>チーム</div>
<div class="t" style='left:1436.8px;top:88.6px;font-size:20.59px;line-height:20.59px;color:#e8efe9;transform:scaleX(0.9355)'>実行したい作業を入力してください</div>
<div class="t" style='left:1886.9px;top:86.5px;font-size:20.31px;line-height:20.31px;color:#ffffff;transform:scaleX(1.1759)'>共有</div>
<div class="t" style='left:6px;top:201px;font-size:22.22px;line-height:22.22px;color:#444444;transform:scaleX(0.8703)'>データの</div>
<div class="t" style='left:12.9px;top:232.9px;font-size:21.85px;line-height:21.85px;color:#444444;transform:scaleX(1.1081)'>取得</div>
<div class="t" style='left:124px;top:136px;font-size:22.47px;line-height:22.47px;color:#444444;transform:scaleX(0.8869)'>テキストまたは CSV から</div>
<div class="t" style='left:125px;top:176.5px;font-size:21.48px;line-height:21.48px;color:#444444;transform:scaleX(1.0816)'>Web から</div>
<div class="t" style='left:124px;top:217px;font-size:19.19px;line-height:19.19px;color:#444444;transform:scaleX(1.0606)'>テーブルまたは範囲から</div>
<div class="t" style='left:402px;top:136.4px;font-size:21.02px;line-height:21.02px;color:#444444;transform:scaleX(0.9570)'>最近使ったソース</div>
<div class="t" style='left:400px;top:176px;font-size:21.44px;line-height:21.44px;color:#444444;transform:scaleX(1.1092)'>既存の接続</div>
<div class="t" style='left:586px;top:204px;font-size:20.22px;line-height:20.22px;color:#444444;transform:scaleX(1.0077)'>すべて</div>
<div class="t" style='left:583px;top:236px;font-size:22.47px;line-height:22.47px;color:#444444;transform:scaleX(1.0812)'>更新</div>
<div class="t" style='left:689.3px;top:140.8px;font-size:21.65px;line-height:21.65px;color:#444444;transform:scaleX(0.8329)'>クエリと接続</div>
<div class="t" style='left:689px;top:183.8px;font-size:22.6px;line-height:22.6px;color:#a5a5a5;transform:scaleX(0.7695)'>プロパティ</div>
<div class="t" style='left:685.5px;top:227px;font-size:21.88px;line-height:21.88px;color:#a5a5a5;transform:scaleX(0.9007)'>リンクの編集</div>
<div class="t" style='left:864px;top:202.3px;font-size:21.65px;line-height:21.65px;color:#444444;transform:scaleX(0.9998)'>並べ替え</div>
<div class="t" style='left:966.6px;top:202px;font-size:22.56px;line-height:22.56px;color:#444444;transform:scaleX(0.7363)'>フィルター</div>
<div class="t" style='left:1094.5px;top:140.3px;font-size:22.41px;line-height:22.41px;color:#a5a5a5;transform:scaleX(0.7491)'>クリア</div>
<div class="t" style='left:1095.5px;top:185.3px;font-size:20.61px;line-height:20.61px;color:#a5a5a5;transform:scaleX(1.1567)'>再適用</div>
<div class="t" style='left:1095.8px;top:229.5px;font-size:19.7px;line-height:19.7px;color:#444444;transform:scaleX(1.1996)'>詳細設定</div>
<div class="t" style='left:1210.7px;top:202.3px;font-size:22.24px;line-height:22.24px;color:#444444;transform:scaleX(0.9978)'>区切り位置</div>
<div class="t" style='left:1430.2px;top:203.8px;font-size:20.74px;line-height:20.74px;color:#444444;transform:scaleX(1.2717)'>What-If 分析</div>
<div class="t" style='left:1592.6px;top:203px;font-size:20.63px;line-height:20.63px;color:#a5a5a5;transform:scaleX(1.1218)'>予測</div>
<div class="t" style='left:1586px;top:231.6px;font-size:22.94px;line-height:22.94px;color:#a5a5a5;transform:scaleX(0.8951)'>シート</div>
<div class="t" style='left:1698.8px;top:135.5px;font-size:23.2px;line-height:23.2px;color:#444444;transform:scaleX(0.8459)'>グループ化</div>
<div class="t" style='left:1697.8px;top:174.5px;font-size:23.2px;line-height:23.2px;color:#444444;transform:scaleX(0.8950)'>グループ解除</div>
<div class="t" style='left:1699.8px;top:215px;font-size:21.65px;line-height:21.65px;color:#444444;transform:scaleX(1.0911)'>小計</div>
<div class="t" style='left:192px;top:270.2px;font-size:20.8px;line-height:20.8px;color:#666666;transform:scaleX(0.9772)'>データの取得と変換</div>
<div class="t" style='left:639.8px;top:269.8px;font-size:21.65px;line-height:21.65px;color:#666666;transform:scaleX(0.8299)'>クエリと接続</div>
<div class="t" style='left:918.1px;top:270px;font-size:21.44px;line-height:21.44px;color:#666666;transform:scaleX(0.8620)'>並べ替えとフィルター</div>
<div class="t" style='left:1250px;top:267.9px;font-size:23.33px;line-height:23.33px;color:#666666;transform:scaleX(0.8312)'>データ ツール</div>
<div class="t" style='left:1517.3px;top:270.6px;font-size:21.37px;line-height:21.37px;color:#666666;transform:scaleX(1.1189)'>予測</div>
<div class="t" style='left:1704.8px;top:269.4px;font-size:22.41px;line-height:22.41px;color:#666666;transform:scaleX(0.7717)'>アウトライン</div>
<div class="t" style='left:18.7px;top:331.8px;font-size:29.58px;line-height:29.58px;color:#444444;transform:scaleX(0.9284)'>A3</div>
<div class="t" style='left:440px;top:325.8px;font-size:33.04px;line-height:33.04px;color:#6d6d6d;transform:scaleX(1.0824);font-family:"Liberation Serif",serif;font-style:italic'>fx</div>
<div class="t" style='left:16.3px;top:399.6px;font-size:17.54px;line-height:17.54px;color:#444444;transform:scaleX(0.7355)'>1</div>
<div class="t" style='left:48.4px;top:398.6px;font-size:17.29px;line-height:17.29px;color:#444444;transform:scaleX(0.9100)'>2</div>
<div class="t" style='left:81.8px;top:398.6px;font-size:17.04px;line-height:17.04px;color:#444444;transform:scaleX(0.9510)'>3</div>
<div class="t" style='left:227px;top:396.5px;font-size:27.25px;line-height:27.25px;color:#217346;transform:scaleX(0.9184)'>A</div>
<div class="t" style='left:365.9px;top:396.5px;font-size:27.25px;line-height:27.25px;color:#1e1e1e;transform:scaleX(1.0953)'>B</div>
<div class="t" style='left:481.4px;top:396.5px;font-size:26.48px;line-height:26.48px;color:#1e1e1e;transform:scaleX(0.9835)'>C</div>
<div class="t" style='left:565.4px;top:396.5px;font-size:27.25px;line-height:27.25px;color:#1e1e1e;transform:scaleX(0.9858)'>D</div>
<div class="t" style='left:724.2px;top:396.5px;font-size:27.25px;line-height:27.25px;color:#1e1e1e;transform:scaleX(1.0211)'>E</div>
<div class="t" style='left:893.6px;top:396.5px;font-size:27.25px;line-height:27.25px;color:#1e1e1e;transform:scaleX(1.0650)'>F</div>
<div class="t" style='left:998.4px;top:396.5px;font-size:26.48px;line-height:26.48px;color:#1e1e1e;transform:scaleX(1.0724)'>G</div>
<div class="t" style='left:1134.4px;top:396.5px;font-size:27.25px;line-height:27.25px;color:#1e1e1e;transform:scaleX(1.0291)'>H</div>
<div class="t" style='left:1287.5px;top:396.5px;font-size:28.48px;line-height:28.48px;color:#1e1e1e;transform:scaleX(0.9497);font-family:"Liberation Serif",serif'>I</div>
<div class="t" style='left:1388px;top:397.5px;font-size:26.86px;line-height:26.86px;color:#1e1e1e;transform:scaleX(1.3267)'>J</div>
<div class="t" style='left:1505.3px;top:396.5px;font-size:27.25px;line-height:27.25px;color:#1e1e1e;transform:scaleX(1.0522)'>K</div>
<div class="t" style='left:1666.8px;top:396.5px;font-size:27.25px;line-height:27.25px;color:#1e1e1e;transform:scaleX(1.2512)'>L</div>
<div class="t" style='left:1809.3px;top:396.5px;font-size:27.25px;line-height:27.25px;color:#1e1e1e;transform:scaleX(1.0911)'>M</div>
<div class="t" style='left:125.7px;top:428.9px;font-size:28.26px;line-height:28.26px;color:#000000;transform:scaleX(0.5051)'>1</div>
<div class="t" style='left:163px;top:431.5px;font-size:25.81px;line-height:25.81px;color:#000000;transform:scaleX(1.0759)'>日付</div>
<div class="t" style='left:314.6px;top:431.5px;font-size:23.76px;line-height:23.76px;color:#000000;transform:scaleX(1.2102)'>顧客番号</div>
<div class="t" style='left:445.4px;top:431.5px;font-size:25px;line-height:25px;color:#000000;transform:scaleX(1.1363)'>担当者</div>
<div class="t" style='left:546.3px;top:431.5px;font-size:25.26px;line-height:25.26px;color:#000000;transform:scaleX(1.1421)'>品番</div>
<div class="t" style='left:617.7px;top:431.5px;font-size:25.81px;line-height:25.81px;color:#000000;transform:scaleX(1.1284)'>品名</div>
<div class="t" style='left:875.8px;top:431.5px;font-size:25.81px;line-height:25.81px;color:#000000;transform:scaleX(1.0756)'>単価</div>
<div class="t" style='left:980.3px;top:431.5px;font-size:25.53px;line-height:25.53px;color:#000000;transform:scaleX(1.0667)'>個数</div>
<div class="t" style='left:1117.4px;top:431.5px;font-size:24.24px;line-height:24.24px;color:#000000;transform:scaleX(1.1938)'>金額</div>
<div class="t" style='left:151.5px;top:1086px;font-size:24.02px;line-height:24.02px;color:#217346;transform:scaleX(1.1275)'>集計処理</div>
<div class="t" style='left:8.7px;top:1132.7px;font-size:20.71px;line-height:20.71px;color:#444444;transform:scaleX(1.1602)'>準備完了</div>
<div class="t" style='left:1840px;top:1131.3px;font-size:24.51px;line-height:24.51px;color:#444444;transform:scaleX(1.1306)'>100%</div>
</body></html>
